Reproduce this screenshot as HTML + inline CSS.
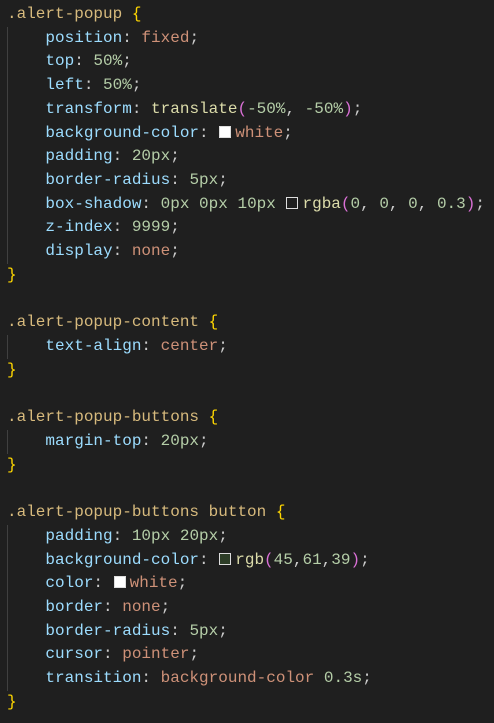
<!DOCTYPE html>
<html><head><style>
html,body{margin:0;padding:0;background:#1f1f1f;}
body{width:494px;height:723px;overflow:hidden;position:relative;}
pre{margin:0;position:absolute;left:7px;top:3px;font-family:"Liberation Mono",monospace;font-size:16px;line-height:23.72px;color:#cccccc;}
.s{color:#d7ba7d}.p{color:#9cdcfe}.v{color:#ce9178}.n{color:#b5cea8}.b{color:#ffd700}.m{color:#da70d6}.f{color:#dcdcaa}
.sw{display:inline-block;width:10px;height:10px;border:1px solid #ddd;margin:0 4px 0 1px;vertical-align:-1px}
.g{position:absolute;left:7px;width:1px;background:#404040}
</style></head><body>
<div class="g" style="top:27px;height:237px"></div>
<div class="g" style="top:335px;height:24px"></div>
<div class="g" style="top:430px;height:24px"></div>
<div class="g" style="top:525px;height:166px"></div>
<pre><span class="s">.alert-popup</span> <span class="b">{</span>
    <span class="p">position</span>: <span class="v">fixed</span>;
    <span class="p">top</span>: <span class="n">50%</span>;
    <span class="p">left</span>: <span class="n">50%</span>;
    <span class="p">transform</span>: <span class="f">translate</span><span class="m">(</span><span class="n">-50%</span>, <span class="n">-50%</span><span class="m">)</span>;
    <span class="p">background-color</span>: <span class="sw" style="background:#fff"></span><span class="v">white</span>;
    <span class="p">padding</span>: <span class="n">20px</span>;
    <span class="p">border-radius</span>: <span class="n">5px</span>;
    <span class="p">box-shadow</span>: <span class="n">0px</span> <span class="n">0px</span> <span class="n">10px</span> <span class="sw" style="background:#1f1f1f"></span><span class="f">rgba</span><span class="m">(</span><span class="n">0</span>, <span class="n">0</span>, <span class="n">0</span>, <span class="n">0.3</span><span class="m">)</span>;
    <span class="p">z-index</span>: <span class="n">9999</span>;
    <span class="p">display</span>: <span class="v">none</span>;
<span class="b">}</span>

<span class="s">.alert-popup-content</span> <span class="b">{</span>
    <span class="p">text-align</span>: <span class="v">center</span>;
<span class="b">}</span>

<span class="s">.alert-popup-buttons</span> <span class="b">{</span>
    <span class="p">margin-top</span>: <span class="n">20px</span>;
<span class="b">}</span>

<span class="s">.alert-popup-buttons button</span> <span class="b">{</span>
    <span class="p">padding</span>: <span class="n">10px</span> <span class="n">20px</span>;
    <span class="p">background-color</span>: <span class="sw" style="background:#2d3d27"></span><span class="f">rgb</span><span class="m">(</span><span class="n">45</span>,<span class="n">61</span>,<span class="n">39</span><span class="m">)</span>;
    <span class="p">color</span>: <span class="sw" style="background:#fff"></span><span class="v">white</span>;
    <span class="p">border</span>: <span class="v">none</span>;
    <span class="p">border-radius</span>: <span class="n">5px</span>;
    <span class="p">cursor</span>: <span class="v">pointer</span>;
    <span class="p">transition</span>: <span class="v">background-color</span> <span class="n">0.3s</span>;
<span class="b">}</span></pre>
</body></html>
